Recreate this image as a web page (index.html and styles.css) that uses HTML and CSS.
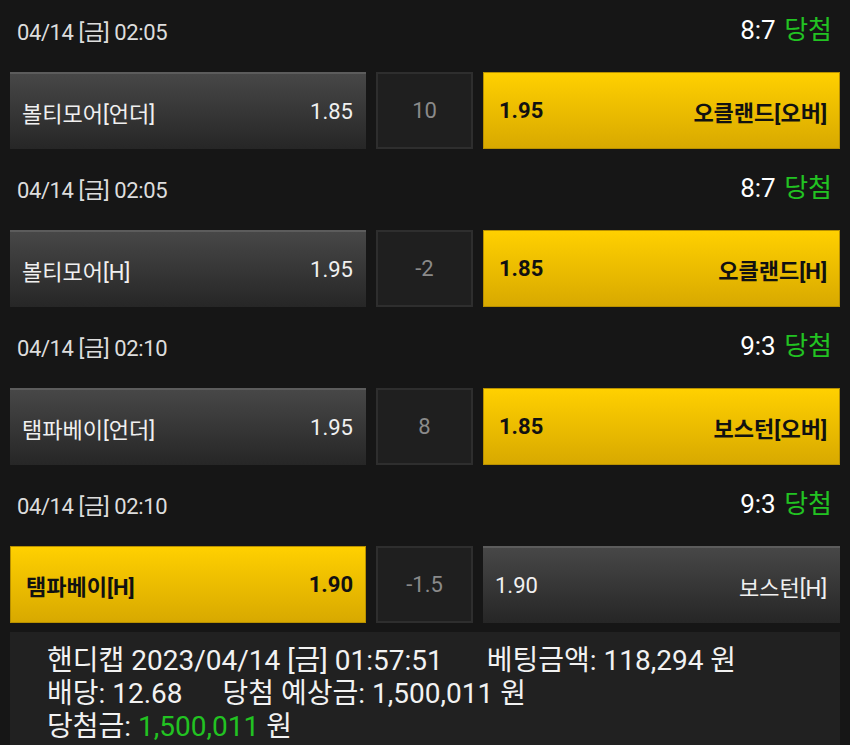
FILE: index.html
```html
<!DOCTYPE html>
<html lang="ko">
<head>
<meta charset="utf-8">
<link rel="stylesheet" href="styles.css">
</head>
<body>
<div class="list">
  <div class="game">
    <div class="head"><span class="date">04/14 [금] 02:05</span><span class="res">8:7 <em>당첨</em></span></div>
    <div class="row">
      <div class="btn gray"><span>볼티모어[언더]</span><span>1.85</span></div>
      <div class="mid">10</div>
      <div class="btn yellow"><span>1.95</span><span>오클랜드[오버]</span></div>
    </div>
  </div>
  <div class="game">
    <div class="head"><span class="date">04/14 [금] 02:05</span><span class="res">8:7 <em>당첨</em></span></div>
    <div class="row">
      <div class="btn gray"><span>볼티모어[H]</span><span>1.95</span></div>
      <div class="mid">-2</div>
      <div class="btn yellow"><span>1.85</span><span>오클랜드[H]</span></div>
    </div>
  </div>
  <div class="game">
    <div class="head"><span class="date">04/14 [금] 02:10</span><span class="res">9:3 <em>당첨</em></span></div>
    <div class="row">
      <div class="btn gray"><span>탬파베이[언더]</span><span>1.95</span></div>
      <div class="mid">8</div>
      <div class="btn yellow"><span>1.85</span><span>보스턴[오버]</span></div>
    </div>
  </div>
  <div class="game">
    <div class="head"><span class="date">04/14 [금] 02:10</span><span class="res">9:3 <em>당첨</em></span></div>
    <div class="row">
      <div class="btn yellow"><span>탬파베이[H]</span><span>1.90</span></div>
      <div class="mid">-1.5</div>
      <div class="btn gray"><span>1.90</span><span>보스턴[H]</span></div>
    </div>
  </div>
  <div class="summary">
    <div class="line"><span>핸디캡 2023/04/14 [금] 01:57:51</span><span class="gap">베팅금액: 118,294 원</span></div>
    <div class="line"><span>배당: 12.68</span><span class="gap gap2">당첨 예상금: 1,500,011 원</span></div>
    <div class="line"><span>당첨금: <em class="win">1,500,011</em> 원</span></div>
  </div>
</div>
</body>
</html>
```
FILE: styles.css
```css
html, body {
  margin: 0;
  padding: 0;
  background: #161616;
  font-family: Roboto, "Noto Sans CJK KR", sans-serif;
  color: #eee;
  overflow: hidden;
}
.list {
  padding: 0 10px;
}
.game {
  margin-bottom: 9px;
}
.head {
  height: 60px;
  margin-bottom: 12px;
  display: flex;
  align-items: center;
  justify-content: space-between;
  padding: 0 8px 0 7px;
}
.date {
  font-size: 22px;
  color: #ddd;
  letter-spacing: -0.4px;
}
.res {
  font-size: 26px;
  color: #fff;
  margin-top: -5px;
}
.res em {
  font-style: normal;
  color: #22c322;
  margin-left: 2px;
}
.row {
  display: grid;
  grid-template-columns: 356px 97px 357px;
  column-gap: 10px;
  height: 77px;
}
.btn {
  display: flex;
  align-items: center;
  justify-content: space-between;
  padding: 0 12px 0 12px;
  font-size: 22px;
  box-sizing: border-box;
}
.gray {
  background: linear-gradient(#474747, #262626);
  border-top: 2px solid #5c5c5c;
  color: #f0f0f0;
  padding-right: 13px;
}
.yellow {
  background: linear-gradient(#ffd000, #d8a900);
  border: 1px solid #b89000;
  color: #111;
  font-weight: bold;
  padding-left: 15px;
}
.mid {
  background: #1f1f1f;
  border: 2px solid #2e2e2e;
  box-sizing: border-box;
  display: flex;
  align-items: center;
  justify-content: center;
  color: #8a8a8a;
  font-size: 22px;
}
.summary {
  margin-top: 1px;
  background: #212121;
  padding: 12px 37px 20px;
  font-size: 28px;
  line-height: 33px;
  color: #f2f2f2;
}
.gap {
  margin-left: 44px;
}
.gap2 {
  margin-left: 40px;
}
.win {
  font-style: normal;
  color: #22c322;
}
```
